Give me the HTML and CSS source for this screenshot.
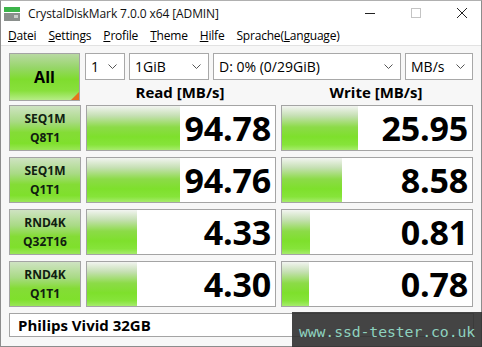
FILE: index.html
```html
<!DOCTYPE html>
<html>
<head>
<meta charset="utf-8">
<link rel="stylesheet" href="styles.css">
</head>
<body>
<div class="window">
  <div class="titlebar">
    <svg class="appicon" width="16" height="14" viewBox="0 0 16 14">
      <rect x="0" y="0" width="16" height="5" fill="#3cb44a"/>
      <rect x="0" y="6" width="16" height="8" fill="#8a8f8c"/>
      <rect x="10" y="8" width="4" height="3" fill="#c8ccc9"/>
    </svg>
    <span class="title">CrystalDiskMark 7.0.0 x64 [ADMIN]</span>
    <div class="controls">
      <svg width="12" height="12" viewBox="0 0 12 12"><line x1="1" y1="6.5" x2="11" y2="6.5" stroke="#222" stroke-width="1"/></svg>
      <svg width="12" height="12" viewBox="0 0 12 12"><rect x="1.5" y="1.5" width="9" height="9" fill="none" stroke="#c4c4c4" stroke-width="1"/></svg>
      <svg width="12" height="12" viewBox="0 0 12 12"><path d="M1 1 L11 11 M11 1 L1 11" stroke="#222" stroke-width="1"/></svg>
    </div>
  </div>
  <div class="menubar">
    <span><u>D</u>atei</span>
    <span><u>S</u>ettings</span>
    <span><u>P</u>rofile</span>
    <span><u>T</u>heme</span>
    <span><u>H</u>ilfe</span>
    <span>Sprache(<u>L</u>anguage)</span>
  </div>
  <div class="main">
    <div class="top">
      <div class="allbtn">All<span class="corner"></span></div>
      <div class="topright">
        <div class="selects">
          <div class="sel s1"><span>1</span><svg width="9" height="6" viewBox="0 0 9 6"><path d="M0.5 0.5 L4.5 4.5 L8.5 0.5" fill="none" stroke="#555" stroke-width="1"/></svg></div>
          <div class="sel s2"><span>1GiB</span><svg width="9" height="6" viewBox="0 0 9 6"><path d="M0.5 0.5 L4.5 4.5 L8.5 0.5" fill="none" stroke="#555" stroke-width="1"/></svg></div>
          <div class="sel s3"><span>D: 0% (0/29GiB)</span><svg width="9" height="6" viewBox="0 0 9 6"><path d="M0.5 0.5 L4.5 4.5 L8.5 0.5" fill="none" stroke="#555" stroke-width="1"/></svg></div>
          <div class="sel s4"><span>MB/s</span><svg width="9" height="6" viewBox="0 0 9 6"><path d="M0.5 0.5 L4.5 4.5 L8.5 0.5" fill="none" stroke="#555" stroke-width="1"/></svg></div>
        </div>
        <div class="headers">
          <div class="hdr hread">Read [MB/s]</div>
          <div class="hdr hwrite">Write [MB/s]</div>
        </div>
      </div>
    </div>
    <div class="rows">
      <div class="row">
        <div class="label">SEQ1M<br>Q8T1</div>
        <div class="cell read"><div class="bar" style="width:93px"></div><span class="val">94.78</span></div>
        <div class="cell write"><div class="bar" style="width:76px"></div><span class="val">25.95</span></div>
      </div>
      <div class="row">
        <div class="label">SEQ1M<br>Q1T1</div>
        <div class="cell read"><div class="bar" style="width:93px"></div><span class="val">94.76</span></div>
        <div class="cell write"><div class="bar" style="width:60px"></div><span class="val">8.58</span></div>
      </div>
      <div class="row">
        <div class="label">RND4K<br>Q32T16</div>
        <div class="cell read"><div class="bar" style="width:50px"></div><span class="val">4.33</span></div>
        <div class="cell write"><div class="bar" style="width:28px"></div><span class="val">0.81</span></div>
      </div>
      <div class="row">
        <div class="label">RND4K<br>Q1T1</div>
        <div class="cell read"><div class="bar" style="width:50px"></div><span class="val">4.30</span></div>
        <div class="cell write"><div class="bar" style="width:27px"></div><span class="val">0.78</span></div>
      </div>
    </div>
    <div class="namebox">Philips Vivid 32GB</div>
  </div>
  <div class="watermark">www.ssd-tester.co.uk</div>
</div>
</body>
</html>
```
FILE: styles.css
```css
* { box-sizing: border-box; }
html, body { margin: 0; padding: 0; }
body {
  width: 482px;
  height: 347px;
  overflow: hidden;
  background: #ffffff;
  font-family: "Open Sans", "Noto Sans", sans-serif;
  color: #000;
}
.window {
  position: relative;
  width: 482px;
  height: 347px;
  border: 1px solid #8c8c8c;
  border-top-color: #b0b0b0;
  background: #f7f7f7;
}
.titlebar {
  height: 24px;
  background: #fff;
  display: flex;
  align-items: center;
  padding-left: 3px;
}
.appicon { flex: none; margin-top: 1px; }
.title {
  margin-left: 8px;
  font-size: 12px;
  letter-spacing: -0.1px;
  color: #111;
}
.controls {
  margin-left: auto;
  display: flex;
  gap: 34px;
  padding-right: 13px;
  align-items: center;
}
.menubar {
  height: 21px;
  background: #fff;
  display: flex;
  align-items: center;
  gap: 0;
  padding-left: 7px;
  font-size: 12px;
  border-bottom: 1px solid #e2e2e2;
}
.menubar span { margin-right: 12px; letter-spacing: -0.2px; }
.main {
  padding: 7px 8px 0 8px;
}
.top {
  display: flex;
  gap: 5px;
  height: 51px;
}
.allbtn {
  position: relative;
  width: 72px;
  height: 48px;
  border: 1px solid #a4a4a4;
  background: linear-gradient(to bottom, #b9d9a3 0%, #96d668 30%, #7fdc2e 55%, #88e03c 80%, #b6ec88 100%);
  display: flex;
  align-items: center;
  justify-content: center;
  font-weight: 700;
  font-size: 16px;
}
.corner {
  position: absolute;
  right: 0;
  bottom: 0;
  width: 0;
  height: 0;
  border-left: 8px solid transparent;
  border-bottom: 8px solid #e6731c;
}
.topright { flex: 1; display: flex; flex-direction: column; }
.selects { display: flex; gap: 4px; height: 27px; }
.sel {
  height: 27px;
  border: 1px solid #a8a8a8;
  background: #fff;
  display: flex;
  align-items: center;
  justify-content: space-between;
  padding: 0 7px 0 5px;
  font-size: 14px;
}
.sel span { margin-top: -1px; }
.s1 { width: 40px; }
.s2 { width: 80px; }
.s3 { width: 188px; }
.s4 { width: 68px; }
.headers { display: flex; gap: 5px; height: 24px; align-items: center; }
.hdr {
  font-weight: 700;
  font-size: 15px;
  text-align: center;
}
.hread { width: 190px; }
.hwrite { width: 192px; }
.rows {
  display: flex;
  flex-direction: column;
  gap: 6px;
  margin-top: 1px;
}
.row {
  display: flex;
  gap: 5px;
  height: 46px;
}
.label {
  width: 72px;
  border: 1px solid #a4a4a4;
  background: linear-gradient(to bottom, #cfe3c2 0%, #a9da86 35%, #84dc36 60%, #7fe02c 85%, #9ae658 100%);
  display: flex;
  align-items: center;
  justify-content: center;
  text-align: center;
  font-weight: 700;
  font-size: 12px;
  line-height: 19px;
  color: #102010;
}
.cell {
  position: relative;
  border: 1px solid #a4a4a4;
  background: #fff;
  display: flex;
  align-items: center;
  justify-content: flex-end;
}
.read { width: 190px; }
.write { width: 192px; }
.bar {
  position: absolute;
  left: 0;
  top: 0;
  bottom: 0;
  background: linear-gradient(to bottom, #f2f4f0 0%, #c6e0b4 22%, #8cdb48 48%, #7ee02c 70%, #86e43a 88%, #a6ec6c 100%);
}
.val {
  position: relative;
  font-weight: 700;
  font-size: 34px;
  line-height: 1;
  padding-right: 4px;
  margin-top: -1px;
  letter-spacing: -0.2px;
}
.namebox {
  margin-top: 6px;
  width: 465px;
  height: 24px;
  border: 1px solid #a4a4a4;
  background: #fff;
  display: flex;
  align-items: center;
  padding-left: 8px;
  font-weight: 700;
  font-size: 15px;
}
.watermark {
  position: absolute;
  right: -1px;
  bottom: -1px;
  width: 190px;
  height: 35px;
  background: rgba(48, 48, 48, 0.9);
  color: #8ed2bf;
  font-family: "DejaVu Sans Mono", "Liberation Mono", monospace;
  font-size: 14.8px;
  display: flex;
  align-items: flex-end;
  justify-content: center;
  padding-bottom: 7px;
  letter-spacing: -0.1px;
}
```
